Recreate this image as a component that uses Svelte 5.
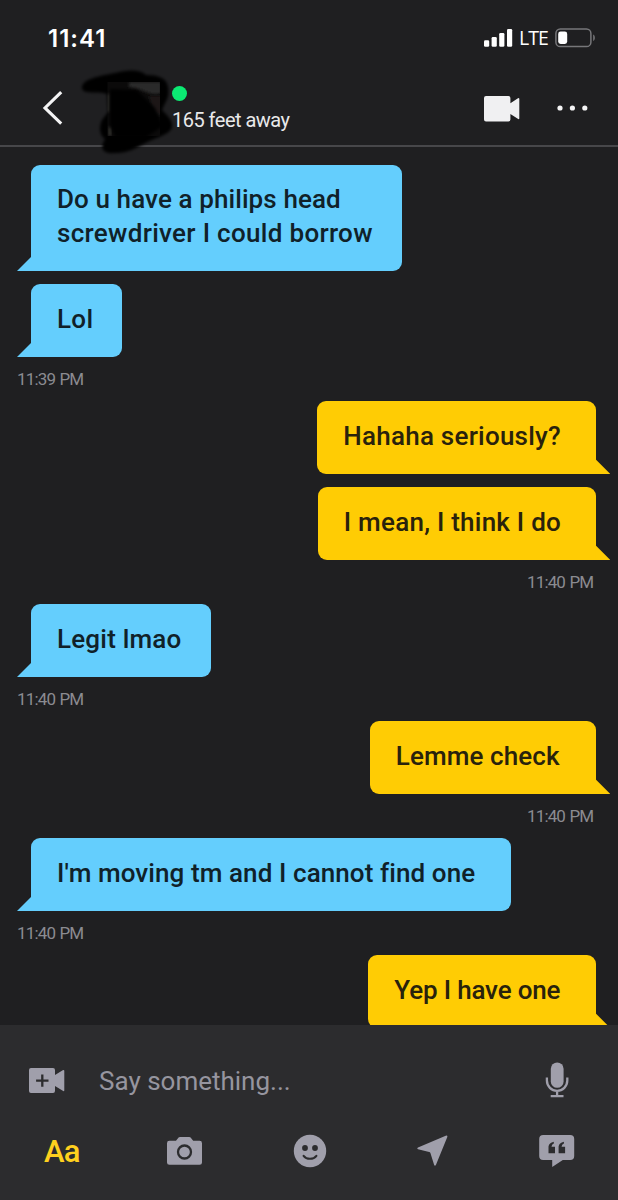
<script>
  const groups = [
    {
      side: 'in',
      time: '11:39 PM',
      bubbles: [
        { width: 371, lines: [['Do u have a philips head', 0.1], ['screwdriver I could borrow', 0.31]] },
        { width: 91, lines: [['Lol', 0.3]] }
      ]
    },
    {
      side: 'out',
      time: '11:40 PM',
      bubbles: [
        { width: 279, lines: [['Hahaha seriously?', 0.24]] },
        { width: 278.5, lines: [['I mean, I think I do', 0.24]] }
      ]
    },
    { side: 'in', time: '11:40 PM', bubbles: [{ width: 179.5, lines: [['Legit lmao', 0.2]] }] },
    { side: 'out', time: '11:40 PM', bubbles: [{ width: 226.5, lines: [['Lemme check', 0.1]] }] },
    { side: 'in', time: '11:40 PM', bubbles: [{ width: 480, lines: [["I'm moving tm and I cannot find one", 0.09]] }] },
    { side: 'out', time: '', bubbles: [{ width: 228, lines: [['Yep I have one', -0.17]] }] }
  ];
</script>

<div class="phone">
  <div class="status">
    <span class="clock">11:41</span>
    <div class="signal">
      <svg width="29" height="18" viewBox="0 0 29 18" fill="#fff">
        <rect x="0" y="11.3" width="5.2" height="6.5" rx="1.3" />
        <rect x="7.6" y="8" width="5.2" height="9.8" rx="1.3" />
        <rect x="15.2" y="4" width="5.2" height="13.8" rx="1.3" />
        <rect x="23" y="0" width="5.2" height="17.8" rx="1.3" />
      </svg>
      <span class="lte">LTE</span>
      <svg width="41" height="20" viewBox="0 0 41 20">
        <rect x="0.9" y="1" width="35" height="17.6" rx="4.4" fill="none" stroke="#77777a" stroke-width="1.5" />
        <path d="M38.2 6.5c2.2 1 2.2 5.6 0 6.6z" fill="#77777a" />
        <rect x="3.2" y="3.6" width="9" height="12.4" rx="2.4" fill="#fff" />
      </svg>
    </div>
  </div>

  <header>
    <svg class="back" width="22" height="36" viewBox="0 0 22 36">
      <path d="M19.2 2.2 3 17.9 19.2 33.6" fill="none" stroke="#f4f4f5" stroke-width="3.1" />
    </svg>
    <div class="avatar">
      <svg class="smudge" width="110" height="100" viewBox="0 0 110 100">
        <defs>
          <filter id="soft" x="-20%" y="-20%" width="140%" height="140%"><feGaussianBlur stdDeviation="1.7" /></filter>
          <clipPath id="frame"><rect x="32.5" y="22" width="52.5" height="54" /></clipPath>
        </defs>
        <path filter="url(#soft)" d="M7 27C8 19 24 16 40 13C52 10 64 9 71 15C83 15 92 18 93 27C95 38 90 42 87 50C93 56 98 61 97 67C96 73 86 76 77 80C66 84 58 93 40 93C28 94 24 89 30 79C24 75 24 66 27 60L33 52L32 34C24 30 6 36 7 27Z" />
        <g clip-path="url(#frame)">
          <rect x="32" y="22" width="53" height="54" fill="#0b0a0a" />
          <path filter="url(#soft)" d="M54 22H86V33C76 37 72 30 54 27Z" fill="#2b2a29" />
          <path filter="url(#soft)" d="M74 36H86V57L78 52Z" fill="#1b1918" />
          <path filter="url(#soft)" d="M32 34H34V52H32ZM34 67H36V76H34Z" fill="#45423f" />
          <path filter="url(#soft)" d="M35 29L62 30L80 48L88 66L70 78L40 77L35 65Z" />
        </g>
      </svg>
    </div>
    <div class="who">
      <span class="online"></span>
      <span class="distance">165 feet away</span>
    </div>
    <svg class="call" width="36" height="26" viewBox="0 0 36 26" fill="#f0f0f2">
      <path d="M2 0h22.4a2 2 0 0 1 2 2v5.2L33.6 2.4Q35.3 1.4 35.3 3v19.2q0 1.5-1.5.6L26.4 18v5.4a2 2 0 0 1-2 2H2a2 2 0 0 1-2-2V2a2 2 0 0 1 2-2Z" />
    </svg>
    <svg class="more" width="32" height="6" viewBox="0 0 32 6" fill="#f4f4f5">
      <circle cx="3" cy="3" r="2.6" /><circle cx="15.4" cy="3" r="2.6" /><circle cx="27.8" cy="3" r="2.6" />
    </svg>
  </header>

  <main>
    {#each groups as group}
      <section class={group.side}>
        {#each group.bubbles as bubble}
          <div class="bubble" style:width="{bubble.width}px">
            {#each bubble.lines as [text, tracking]}
              <div class="line"><span style:letter-spacing="{tracking}px">{text}</span></div>
            {/each}
          </div>
        {/each}
        {#if group.time}<time>{group.time}</time>{/if}
      </section>
    {/each}
  </main>

  <footer>
    <div class="compose">
      <svg width="36" height="26" viewBox="0 0 36 26" fill="#a09fab">
        <path d="M2 0h22a2 2 0 0 1 2 2v4.9l7.7-4.6q1.6-.8 1.6.7v19.2q0 1.5-1.5.6L26 18v5a2 2 0 0 1-2 2H2a2 2 0 0 1-2-2V2a2 2 0 0 1 2-2Z" />
        <path d="M13.3 6.4v12.4M7.1 12.6h12.4" stroke="#2c2c2e" stroke-width="2.3" />
      </svg>
      <span class="placeholder">Say something...</span>
      <svg class="mic" width="24" height="36" viewBox="0 0 24 36">
        <rect x="5.8" y=".4" width="12.8" height="25.4" rx="6.4" fill="#a09fab" />
        <path d="M1.9 15.4v3.2a10.2 10.2 0 0 0 20.4 0v-3.2M12.1 29v5M5.7 34.2h12.8" fill="none" stroke="#a09fab" stroke-width="2.3" />
      </svg>
    </div>
    <nav>
      <span class="aa">Aa</span>
      <svg width="36" height="28" viewBox="0 0 36 28" fill="#a09fab">
        <path d="M2.4 3.8H9L11.6.6Q12 0 13 0h9.2q1 0 1.4.6l2.6 3.2h6.4q2.4 0 2.4 2.4v19.2q0 2.4-2.4 2.4H2.4Q0 27.8 0 25.4V6.2q0-2.4 2.4-2.4Z" />
        <circle cx="17.5" cy="15" r="6.5" fill="none" stroke="#2c2c2e" stroke-width="2.3" />
      </svg>
      <svg width="34" height="34" viewBox="0 0 34 34">
        <circle cx="17" cy="17" r="16.2" fill="#a09fab" />
        <circle cx="12" cy="14" r="2.9" fill="#2c2c2e" /><circle cx="22" cy="14" r="2.9" fill="#2c2c2e" />
        <path d="M10.6 21.8q2.2 3 6.4 3t6.4-3" fill="none" stroke="#2c2c2e" stroke-width="2.1" stroke-linecap="round" />
      </svg>
      <svg width="31" height="32" viewBox="0 0 31 32" fill="#a09fab">
        <path d="M1 12.4 28.7.7Q30.9 0 30.2 2.2L19 29.8q-1.1 2-1.9 0L13.4 18Q13 17.2 12.2 17L1 14.2Q-.5 13.3 1 12.4Z" />
      </svg>
      <svg width="36" height="33" viewBox="0 0 36 33">
        <path d="M4.2 0h27a4 4 0 0 1 4 4v17a4 4 0 0 1-4 4h-7.4L13.2 31.9V25h-9a4 4 0 0 1-4-4V4a4 4 0 0 1 4-4Z" fill="#a09fab" />
        <path d="M9.5 18.3V11.5Q10 7.6 14.8 6.7V8.4Q12.6 9.2 12.5 11.8H16V18.3Z" fill="#2c2c2e" />
        <path d="M19.6 18.3V11.5Q20.1 7.6 24.9 6.7V8.4Q22.7 9.2 22.6 11.8H26.1V18.3Z" fill="#2c2c2e" />
      </svg>
    </nav>
  </footer>
</div>

<style>
  :global(body) { margin: 0; background: #1f1f21; }
  .phone {
    width: 618px; height: 1200px; overflow: hidden;
    display: flex; flex-direction: column;
    background: #1f1f21; color: #fff; font-family: Roboto, sans-serif;
  }
  svg { display: block; flex: none; }
  span, time { white-space: nowrap; }
  .status {
    height: 76px; box-sizing: border-box; padding: 0 22px 0 48px; flex: none;
    display: flex; align-items: center; justify-content: space-between;
  }
  .clock { font: 600 24px/28px Inter, sans-serif; letter-spacing: 1px; padding-top: 1px; }
  .signal { display: flex; align-items: center; }
  .lte { font: 500 19.5px/24px "Open Sans", sans-serif; letter-spacing: -0.9px; margin: 0 7px 0 6px; }
  header {
    height: 71px; box-sizing: border-box; flex: none; padding-left: 42px;
    display: flex; align-items: flex-start; border-bottom: 2px solid #47474a;
  }
  .back { margin-top: 14px; }
  .avatar { position: relative; width: 52px; height: 52px; margin: 6px 0 0 43px; }
  .smudge { position: absolute; left: -32px; top: -22px; }
  .who { position: relative; width: 130px; margin: 10px 0 0 13px; display: flex; flex-direction: column; }
  .online { width: 15px; height: 15px; border-radius: 50%; background: #0bea73; }
  .distance { font-size: 20px; line-height: 24px; letter-spacing: -0.52px; margin-top: 7px; color: #e9e9ea; }
  .call { margin: 20px 0 0 182px; }
  .more { margin: 29px 0 0 37px; }
  main {
    flex: none; height: 878px; box-sizing: border-box; overflow: hidden;
    padding: 17.5px 21.7px 0 31px;
  }
  section { display: flex; flex-direction: column; align-items: flex-start; }
  section.out { align-items: flex-end; }
  .bubble {
    position: relative; box-sizing: border-box; padding: 17.5px 0 21.1px 26px;
    background: #64cefd; color: #102129; border-radius: 9px 9px 9px 0;
    font-size: 26px; font-weight: 500; line-height: 34px;
  }
  .bubble + .bubble { margin-top: 13.4px; }
  .out .bubble { background: #ffcc04; color: #29220c; border-radius: 9px 9px 0 9px; }
  .bubble::after {
    content: ""; position: absolute; bottom: 0; right: calc(100% - 1px);
    width: 15px; height: 15px; background: inherit; clip-path: polygon(100% 0, 100% 100%, 0 100%);
  }
  .out .bubble::after { right: auto; left: calc(100% - 1px); clip-path: polygon(0 0, 100% 100%, 0 100%); }
  time {
    height: 44.4px; line-height: 44px; margin-left: -14px;
    font-size: 17px; letter-spacing: -0.85px; word-spacing: 1px; color: #8b8b91;
  }
  .out time { margin: 0 3px 0 0; }
  footer { flex: 1; background: #2c2c2e; }
  .compose { height: 92px; padding: 20px 0 0 29px; box-sizing: border-box; display: flex; align-items: center; }
  .placeholder { width: 446px; margin-left: 34px; font-size: 26px; line-height: 34px; color: #96959f; }
  .mic { margin-top: -3px; }
  nav { height: 68px; padding: 0 43.5px 0 44px; display: flex; align-items: center; justify-content: space-between; }
  .aa { width: 32.5px; color: #ffd01e; font-size: 31px; font-weight: 500; line-height: 36px; letter-spacing: -0.8px; padding-top: 2px; }
</style>
